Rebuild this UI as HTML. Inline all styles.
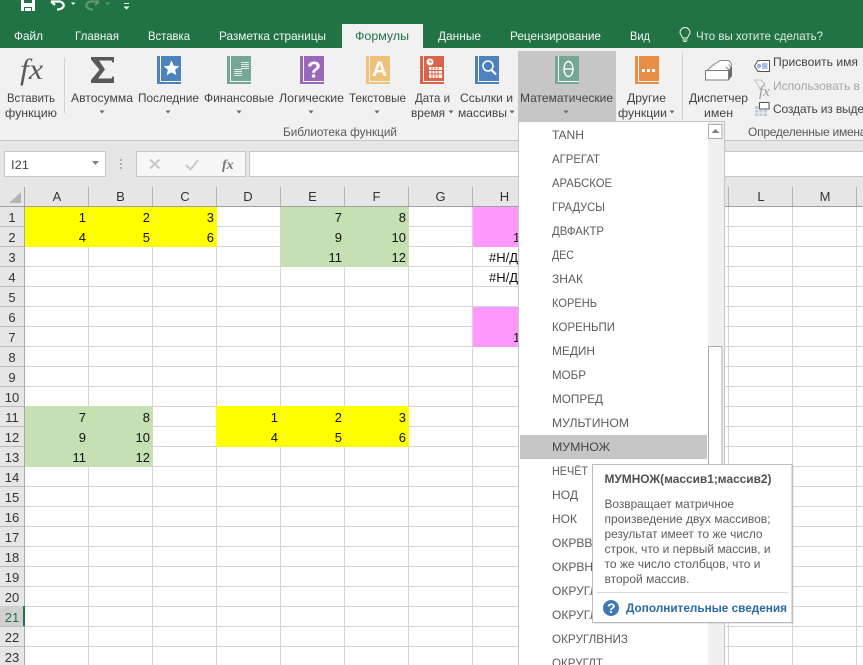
<!DOCTYPE html>
<html lang="ru"><head><meta charset="utf-8"><title>Excel</title>
<style>
html,body{margin:0;padding:0;background:#fff;overflow:hidden}
svg{display:block}
text{font-family:"Liberation Sans","Noto Sans CJK SC",sans-serif;font-size:12px;white-space:pre}
.t{fill:#f4f8f5}
.r{fill:#444}
.g{fill:#595959}
.m{fill:#5c5c5c}
.n{fill:#111;font-size:13px}
.h{fill:#333;font-size:13px}
.d{fill:#5c5c5c}
</style></head><body>
<svg xmlns="http://www.w3.org/2000/svg" width="863" height="665" viewBox="0 0 863 665" shape-rendering="crispEdges">
<defs>
<pattern id="grid" x="25" y="207" width="64" height="20" patternUnits="userSpaceOnUse"><rect x="63" width="1" height="20" fill="#d4d4d4"/><rect y="19" width="64" height="1" fill="#d4d4d4"/></pattern>
<pattern id="cols" x="25" y="187" width="64" height="20" patternUnits="userSpaceOnUse"><rect x="63" width="1" height="20" fill="#b4b4b4"/></pattern>
<pattern id="rows" x="0" y="207" width="25" height="20" patternUnits="userSpaceOnUse"><rect y="19" width="25" height="1" fill="#bdbdbd"/></pattern>
</defs>

<!-- title + tabs -->
<rect width="863" height="48" fill="#217346"/>
<rect x="342" y="24" width="81" height="24" fill="#f1f1f1"/>
<!-- QAT -->
<path d="M21 0H35V11H21Z" fill="#fff"/><path d="M24 0H32V3H24Z M24 7H32V11H24Z" fill="#217346"/><rect x="25" y="8" width="6" height="3" fill="#fff"/>
<g shape-rendering="geometricPrecision">
<path d="M51 1.5 L55 5 M51 1.5 H60 Q64.5 3 63.5 6.5 Q62 9.5 57 9.5" fill="none" stroke="#fff" stroke-width="2.2"/>
<path d="M71 2.5H75.5L73.2 5Z" fill="#fff"/>
<path d="M99 1.5 L95 5 M99 1.5 H90 Q85.5 3 86.5 6.5 Q88 9.5 93 9.5" fill="none" stroke="#5f9878" stroke-width="2.2"/>
<path d="M105 2.5H110L107.5 5Z" fill="#5f9878"/>
<path d="M123.500 6.500H129.500L126.500 9.500Z" fill="#fff"/></g>
<rect x="124" y="3" width="5" height="1" fill="#fff"/>
<text class="t" x="14" y="40" textLength="29" lengthAdjust="spacingAndGlyphs">Файл</text>
<text class="t" x="75" y="40" textLength="44" lengthAdjust="spacingAndGlyphs">Главная</text>
<text class="t" x="148" y="40" textLength="42" lengthAdjust="spacingAndGlyphs">Вставка</text>
<text class="t" x="219" y="40" textLength="107" lengthAdjust="spacingAndGlyphs">Разметка страницы</text>
<text x="355" y="40" textLength="54" lengthAdjust="spacingAndGlyphs" fill="#217346">Формулы</text>
<text class="t" x="438" y="40" textLength="43" lengthAdjust="spacingAndGlyphs">Данные</text>
<text class="t" x="510" y="40" textLength="91" lengthAdjust="spacingAndGlyphs">Рецензирование</text>
<text class="t" x="630" y="40" textLength="20" lengthAdjust="spacingAndGlyphs">Вид</text>
<g shape-rendering="geometricPrecision" fill="none" stroke="#f4f8f5"><path d="M682.500 38 C682 35.500 680 34.500 680 32.500 A5 5 0 0 1 690 32.500 C690 34.500 688 35.500 687.500 38 Z"/><path d="M682.500 40H687.500M683.500 41.500H686.500"/></g>
<text class="t" x="696" y="40" textLength="127" lengthAdjust="spacingAndGlyphs" style="fill:#dfeae3">Что вы хотите сделать?</text>

<!-- ribbon -->
<rect y="48" width="863" height="92" fill="#f1f1f1"/>
<rect y="140" width="863" height="1" fill="#c6c6c6"/>
<rect x="518" y="51" width="98" height="70" fill="#c6c6c6"/>
<rect x="64" y="58" width="1" height="55" fill="#d2d2d2"/>
<rect x="682" y="52" width="1" height="68" fill="#d2d2d2"/>

<text x="20" y="79" style="font-family:'Liberation Serif',serif;font-style:italic;font-size:30px;fill:#5a5a5a" textLength="23" lengthAdjust="spacingAndGlyphs" shape-rendering="geometricPrecision">fx</text>
<path d="M91 57H114V62.500H112.500L111.500 60.500H99L105 69.500L98 78.500H111.500L112.500 76.500H114V83H91V80L99.500 69.800L91 59.500Z" fill="#595959" shape-rendering="geometricPrecision"/>

<!-- books -->
<g id="b1"><rect x="157" y="56" width="24" height="26" fill="#4d82bc"/><rect x="157" y="82" width="24" height="2" fill="#4d82bc"/><rect x="160" y="56" width="1" height="26" fill="#f4f4f4"/><rect x="160" y="81" width="21" height="1" fill="#f4f4f4"/><path d="M171.500 60.500l2.300 5.200 5.600.5-4.300 3.600 1.300 5.500-4.900-2.900-4.900 2.900 1.300-5.500-4.300-3.600 5.600-.5z" fill="#fff" shape-rendering="geometricPrecision"/></g>
<g><rect x="227" y="56" width="24" height="28" fill="#75a894"/><rect x="230" y="56" width="1" height="26" fill="#f4f4f4"/><rect x="230" y="81" width="21" height="1" fill="#f4f4f4"/><rect x="227" y="82" width="24" height="0" fill="#75a894"/>
<g fill="#dfeee8"><rect x="241" y="62" width="8" height="1"/><rect x="241" y="64" width="8" height="1"/><rect x="241" y="66" width="8" height="1"/><rect x="241" y="68" width="8" height="1"/><rect x="234" y="69" width="8" height="1"/><rect x="234" y="71" width="8" height="1"/><rect x="234" y="73" width="8" height="1"/><rect x="234" y="75" width="8" height="1"/></g></g>
<g><rect x="300" y="56" width="24" height="28" fill="#9a68b8"/><rect x="303" y="56" width="1" height="26" fill="#f4f4f4"/><rect x="303" y="81" width="21" height="1" fill="#f4f4f4"/><text x="307" y="77.500" style="font-size:23px;font-weight:bold;fill:#fff" shape-rendering="geometricPrecision">?</text></g>
<g><rect x="366" y="56" width="24" height="28" fill="#efc27b"/><rect x="369" y="56" width="1" height="26" fill="#f4f4f4"/><rect x="369" y="81" width="21" height="1" fill="#f4f4f4"/><text x="372" y="76" style="font-size:21px;font-weight:bold;fill:#fff" shape-rendering="geometricPrecision">A</text></g>
<g><rect x="420" y="56" width="24" height="28" fill="#d9644a"/><rect x="423" y="56" width="1" height="26" fill="#f4f4f4"/><rect x="423" y="81" width="21" height="1" fill="#f4f4f4"/>
<circle cx="430" cy="62" r="3.500" fill="#fff" shape-rendering="geometricPrecision"/><path d="M430 60V62H432" stroke="#d9644a" fill="none"/>
<rect x="429" y="67" width="13" height="11" fill="#fff"/><path d="M432 67V78M435 67V78M438 67V78M429 70.500H442M429 74H442" stroke="#d9644a" fill="none"/></g>
<g><rect x="475" y="56" width="24" height="28" fill="#4d82bc"/><rect x="478" y="56" width="1" height="26" fill="#f4f4f4"/><rect x="478" y="81" width="21" height="1" fill="#f4f4f4"/><g shape-rendering="geometricPrecision" fill="none" stroke="#fff"><circle cx="488" cy="66" r="5" stroke-width="1.500"/><path d="M491.500 70L496 74.500" stroke-width="2.200"/></g></g>
<g><rect x="555" y="56" width="24" height="28" fill="#75a894"/><rect x="558" y="56" width="1" height="26" fill="#f4f4f4"/><rect x="558" y="81" width="21" height="1" fill="#f4f4f4"/><g shape-rendering="geometricPrecision" fill="none" stroke="#fff" stroke-width="1.400"><ellipse cx="568.500" cy="69" rx="4.500" ry="7.500"/><path d="M564 69H573"/></g></g>
<g><rect x="635" y="56" width="24" height="28" fill="#e88e45"/><rect x="638" y="56" width="1" height="26" fill="#f4f4f4"/><rect x="638" y="81" width="21" height="1" fill="#f4f4f4"/><rect x="642" y="69" width="3" height="3" fill="#fff"/><rect x="647" y="69" width="3" height="3" fill="#fff"/><rect x="652" y="69" width="3" height="3" fill="#fff"/></g>

<!-- labels -->
<text class="r" x="7" y="102" textLength="48" lengthAdjust="spacingAndGlyphs">Вставить</text>
<text class="r" x="5" y="117" textLength="52" lengthAdjust="spacingAndGlyphs">функцию</text>
<text class="r" x="71" y="102" textLength="62" lengthAdjust="spacingAndGlyphs">Автосумма</text>
<text class="r" x="138" y="102" textLength="61" lengthAdjust="spacingAndGlyphs">Последние</text>
<text class="r" x="204" y="102" textLength="70" lengthAdjust="spacingAndGlyphs">Финансовые</text>
<text class="r" x="279" y="102" textLength="65" lengthAdjust="spacingAndGlyphs">Логические</text>
<text class="r" x="349" y="102" textLength="57" lengthAdjust="spacingAndGlyphs">Текстовые</text>
<text class="r" x="415" y="102" textLength="35" lengthAdjust="spacingAndGlyphs">Дата и</text>
<text class="r" x="411" y="117" textLength="34" lengthAdjust="spacingAndGlyphs">время</text>
<text class="r" x="460" y="102" textLength="53" lengthAdjust="spacingAndGlyphs">Ссылки и</text>
<text class="r" x="458" y="117" textLength="49" lengthAdjust="spacingAndGlyphs">массивы</text>
<text class="r" x="520" y="102" textLength="93" lengthAdjust="spacingAndGlyphs">Математические</text>
<text class="r" x="627" y="102" textLength="39" lengthAdjust="spacingAndGlyphs">Другие</text>
<text class="r" x="618" y="117" textLength="49" lengthAdjust="spacingAndGlyphs">функции</text>
<text class="r" x="689" y="102" textLength="59" lengthAdjust="spacingAndGlyphs">Диспетчер</text>
<text class="r" x="704" y="117" textLength="29" lengthAdjust="spacingAndGlyphs">имен</text>
<g fill="#666" shape-rendering="geometricPrecision">
<path d="M99.500 110.500h5l-2.500 3z"/><path d="M165.500 110.500h5l-2.500 3z"/><path d="M236.500 110.500h5l-2.500 3z"/><path d="M308.500 110.500h5l-2.500 3z"/><path d="M374.500 110.500h5l-2.500 3z"/><path d="M448.500 110.500h5l-2.500 3z"/><path d="M509.500 110.500h5l-2.500 3z"/><path d="M563.500 110.500h5l-2.500 3z"/><path d="M669.500 110.500h5l-2.500 3z"/>
</g>
<text class="g" x="283" y="136" textLength="114" lengthAdjust="spacingAndGlyphs">Библиотека функций</text>
<text class="g" x="748" y="136" style="letter-spacing:-.25px">Определенные имена</text>

<!-- name manager -->
<g shape-rendering="geometricPrecision">
<path d="M707.500 70L713 65H724L729 70" fill="#fff" stroke="#8a8a8a"/>
<path d="M713 65L717 62.500H727L731 67.500" fill="#fff" stroke="#8a8a8a"/>
<path d="M717 62.500L720 60.500H729L732 65" fill="#fff" stroke="#8a8a8a"/>
<path d="M729 70L732 65V76L729 80Z" fill="#6a6a6a"/>
<rect x="705.500" y="70.500" width="23" height="9.500" fill="#fff" stroke="#7c7c7c"/>
<!-- tag -->
<path d="M758 60.500H769.500V71.500H758L754.500 66Z" fill="#fff" stroke="#555"/>
<circle cx="759" cy="66" r="1.300" fill="none" stroke="#4d82bc"/><path d="M762 64H767.500M762 66H767.500M762 68H767.500" stroke="#4d82bc"/>
<!-- fx dim -->
<path d="M755 80H761L765 84L760 89Z" fill="none" stroke="#c0c0c0"/>
<text x="759" y="96" style="font-family:'Liberation Serif',serif;font-style:italic;font-size:15px;fill:#9a9a9a">fx</text>
</g>
<rect x="755" y="106" width="12" height="10" fill="#b9cde0"/><path d="M759 106V116M763 106V116M755 109.500H767M755 113H767" stroke="#f1f1f1" fill="none"/>
<rect x="759.500" y="102.500" width="9.500" height="6.500" fill="#fff" stroke="#555"/>
<text class="r" x="773" y="66" textLength="85" lengthAdjust="spacingAndGlyphs">Присвоить имя</text>
<text x="773" y="90" fill="#a6a6a6">Использовать в ф</text>
<text class="r" x="773" y="113" style="letter-spacing:-.15px">Создать из выделенного</text>

<!-- formula bar -->
<rect y="141" width="863" height="46" fill="#e6e6e6"/>
<rect x="4.500" y="151.500" width="101" height="25" fill="#fff" stroke="#c6c6c6"/>
<text x="11" y="169" fill="#444" style="font-size:12px" textLength="18" lengthAdjust="spacingAndGlyphs">I21</text>
<path d="M92 161H99L95.500 165Z" fill="#808080" shape-rendering="geometricPrecision"/>
<rect x="120" y="159" width="2" height="2" fill="#b0b0b0"/><rect x="120" y="163" width="2" height="2" fill="#b0b0b0"/><rect x="120" y="167" width="2" height="2" fill="#b0b0b0"/>
<rect x="136.500" y="151.500" width="109" height="25" fill="#f7f7f7" stroke="#c6c6c6"/>
<rect x="249.500" y="151.500" width="620" height="25" fill="#fff" stroke="#c6c6c6"/>
<g shape-rendering="geometricPrecision" fill="none" stroke="#c8c8c8" stroke-width="2"><path d="M150 159.500L159.500 168.500M159.500 159.500L150 168.500"/><path d="M186 165L190.500 169.500L198 160"/></g>
<text x="222" y="169" style="font-family:'Liberation Serif',serif;font-style:italic;font-weight:bold;font-size:14px;fill:#777" shape-rendering="geometricPrecision">fx</text>

<!-- headers -->
<rect y="187" width="863" height="478" fill="#e6e6e6"/>
<rect x="25" y="187" width="838" height="19" fill="url(#cols)"/>
<rect y="207" width="24" height="458" fill="url(#rows)"/>
<rect x="24" y="187" width="1" height="478" fill="#a8a8a8"/>
<rect y="206" width="863" height="1" fill="#9f9f9f"/>
<path d="M9 203H21V192Z" fill="#b4b4b4" shape-rendering="geometricPrecision"/>
<rect x="0" y="606" width="24" height="20" fill="#d0d0d0"/>

<!-- sheet -->
<rect x="25" y="207" width="838" height="458" fill="#fff"/>
<rect x="25" y="207" width="838" height="458" fill="url(#grid)"/>
<rect x="23" y="606" width="2" height="20" fill="#217346"/>
<rect x="25" y="207" width="192" height="40" fill="#ffff00"/>
<rect x="281" y="207" width="128" height="60" fill="#c6e0b4"/>
<rect x="473" y="207" width="64" height="40" fill="#ff99ff"/>
<rect x="473" y="307" width="64" height="40" fill="#ff99ff"/>
<rect x="25" y="406" width="128" height="61" fill="#c6e0b4"/>
<rect x="216" y="406" width="193" height="41" fill="#ffff00"/>

<g class="h" text-anchor="middle" style="text-anchor:middle">
<text class="h" x="57" y="201">A</text><text class="h" x="120.500" y="201">B</text><text class="h" x="185" y="201">C</text><text class="h" x="248" y="201">D</text><text class="h" x="312.500" y="201">E</text><text class="h" x="376.500" y="201">F</text><text class="h" x="440.500" y="201">G</text><text class="h" x="504.500" y="201">H</text><text class="h" x="761" y="201">L</text><text class="h" x="825" y="201">M</text>
<text class="h" x="12" y="222">1</text><text class="h" x="12" y="242">2</text><text class="h" x="12" y="262">3</text><text class="h" x="12" y="282">4</text><text class="h" x="12" y="302">5</text><text class="h" x="12" y="322">6</text><text class="h" x="12" y="342">7</text><text class="h" x="12" y="362">8</text><text class="h" x="12" y="382">9</text><text class="h" x="12" y="402">10</text><text class="h" x="12" y="422">11</text><text class="h" x="12" y="442">12</text><text class="h" x="12" y="462">13</text><text class="h" x="12" y="482">14</text><text class="h" x="12" y="502">15</text><text class="h" x="12" y="522">16</text><text class="h" x="12" y="542">17</text><text class="h" x="12" y="562">18</text><text class="h" x="12" y="582">19</text><text class="h" x="12" y="602">20</text><text class="h" x="12" y="622" style="fill:#217346">21</text><text class="h" x="12" y="642">22</text><text class="h" x="12" y="662">23</text>
</g>

<g style="text-anchor:end">
<text class="n" x="86" y="222">1</text><text class="n" x="150" y="222">2</text><text class="n" x="214" y="222">3</text>
<text class="n" x="86" y="242">4</text><text class="n" x="150" y="242">5</text><text class="n" x="214" y="242">6</text>
<text class="n" x="342" y="222">7</text><text class="n" x="406" y="222">8</text>
<text class="n" x="342" y="242">9</text><text class="n" x="406" y="242">10</text>
<text class="n" x="342" y="262">11</text><text class="n" x="406" y="262">12</text>
<text class="n" x="86" y="422">7</text><text class="n" x="150" y="422">8</text>
<text class="n" x="86" y="442">9</text><text class="n" x="150" y="442">10</text>
<text class="n" x="86" y="462">11</text><text class="n" x="150" y="462">12</text>
<text class="n" x="278" y="422">1</text><text class="n" x="342" y="422">2</text><text class="n" x="406" y="422">3</text>
<text class="n" x="278" y="442">4</text><text class="n" x="342" y="442">5</text><text class="n" x="406" y="442">6</text>
</g>
<text class="n" x="513" y="242">1</text>
<text class="n" x="513" y="342">1</text>
<text class="n" x="489" y="262">#Н/Д</text>
<text class="n" x="489" y="282">#Н/Д</text>

<!-- dropdown -->
<rect x="518.500" y="121.500" width="206" height="550" fill="#fff" stroke="#c6c6c6"/>
<rect x="708" y="122" width="16" height="545" fill="#f0f0f0"/>
<rect x="708.500" y="124.500" width="13.500" height="14" fill="#fff" stroke="#ababab"/>
<path d="M711.500 133H719.500L715.500 129Z" fill="#808080" shape-rendering="geometricPrecision"/>
<rect x="708.500" y="346.500" width="13.500" height="122" fill="#fff" stroke="#ababab"/>
<rect x="520" y="435" width="187" height="24" fill="#c6c6c6"/>
<text class="m" x="552" y="139" textLength="32" lengthAdjust="spacingAndGlyphs">TANH</text>
<text class="m" x="552" y="163" textLength="48" lengthAdjust="spacingAndGlyphs">АГРЕГАТ</text>
<text class="m" x="552" y="187" textLength="60" lengthAdjust="spacingAndGlyphs">АРАБСКОЕ</text>
<text class="m" x="552" y="211" textLength="53" lengthAdjust="spacingAndGlyphs">ГРАДУСЫ</text>
<text class="m" x="552" y="235" textLength="52" lengthAdjust="spacingAndGlyphs">ДВФАКТР</text>
<text class="m" x="552" y="259" textLength="22" lengthAdjust="spacingAndGlyphs">ДЕС</text>
<text class="m" x="552" y="283" textLength="31" lengthAdjust="spacingAndGlyphs">ЗНАК</text>
<text class="m" x="552" y="307" textLength="45" lengthAdjust="spacingAndGlyphs">КОРЕНЬ</text>
<text class="m" x="552" y="331" textLength="63" lengthAdjust="spacingAndGlyphs">КОРЕНЬПИ</text>
<text class="m" x="552" y="355" textLength="43" lengthAdjust="spacingAndGlyphs">МЕДИН</text>
<text class="m" x="552" y="379" textLength="34" lengthAdjust="spacingAndGlyphs">МОБР</text>
<text class="m" x="552" y="403" textLength="51" lengthAdjust="spacingAndGlyphs">МОПРЕД</text>
<text class="m" x="552" y="427" textLength="77" lengthAdjust="spacingAndGlyphs">МУЛЬТИНОМ</text>
<text x="552" y="451" textLength="58" lengthAdjust="spacingAndGlyphs" fill="#444">МУМНОЖ</text>
<text class="m" x="552" y="475" textLength="36" lengthAdjust="spacingAndGlyphs">НЕЧЁТ</text>
<text class="m" x="552" y="499" textLength="26" lengthAdjust="spacingAndGlyphs">НОД</text>
<text class="m" x="552" y="523" textLength="25" lengthAdjust="spacingAndGlyphs">НОК</text>
<text class="m" x="552" y="547">ОКРВВЕРХ</text>
<text class="m" x="552" y="571">ОКРВНИЗ</text>
<text class="m" x="552" y="595">ОКРУГЛ</text>
<text class="m" x="552" y="619">ОКРУГЛВВЕРХ</text>
<text class="m" x="552" y="643" textLength="76" lengthAdjust="spacingAndGlyphs">ОКРУГЛВНИЗ</text>
<text class="m" x="552" y="667" textLength="51" lengthAdjust="spacingAndGlyphs">ОКРУГЛТ</text>

<!-- tooltip -->
<rect x="594" y="466" width="200" height="158" fill="#000" opacity=".08"/>
<rect x="592.500" y="464.500" width="199.500" height="158" fill="#fff" stroke="#bcbcbc"/>
<text x="604.500" y="483" textLength="167" lengthAdjust="spacingAndGlyphs" style="font-weight:bold;fill:#505050">МУМНОЖ(массив1;массив2)</text>
<text class="d" x="604.500" y="508" textLength="129.500" lengthAdjust="spacingAndGlyphs">Возвращает матричное</text>
<text class="d" x="604.500" y="523" textLength="166" lengthAdjust="spacingAndGlyphs">произведение двух массивов;</text>
<text class="d" x="604.500" y="538" textLength="158" lengthAdjust="spacingAndGlyphs">результат имеет то же число</text>
<text class="d" x="604.500" y="553" textLength="166" lengthAdjust="spacingAndGlyphs">строк, что и первый массив, и</text>
<text class="d" x="604.500" y="568" textLength="156" lengthAdjust="spacingAndGlyphs">то же число столбцов, что и</text>
<text class="d" x="604.500" y="583" textLength="85" lengthAdjust="spacingAndGlyphs">второй массив.</text>
<rect x="597" y="592" width="191" height="1" fill="#d9d9d9"/>
<circle cx="611" cy="608" r="8" fill="#3f79b5" shape-rendering="geometricPrecision"/>
<text x="607" y="613" style="font-size:14px;font-weight:bold;fill:#fff" shape-rendering="geometricPrecision">?</text>
<text x="626" y="612" textLength="161" lengthAdjust="spacingAndGlyphs" style="font-weight:bold;fill:#2b6aa8">Дополнительные сведения</text>
</svg>
</body></html>
